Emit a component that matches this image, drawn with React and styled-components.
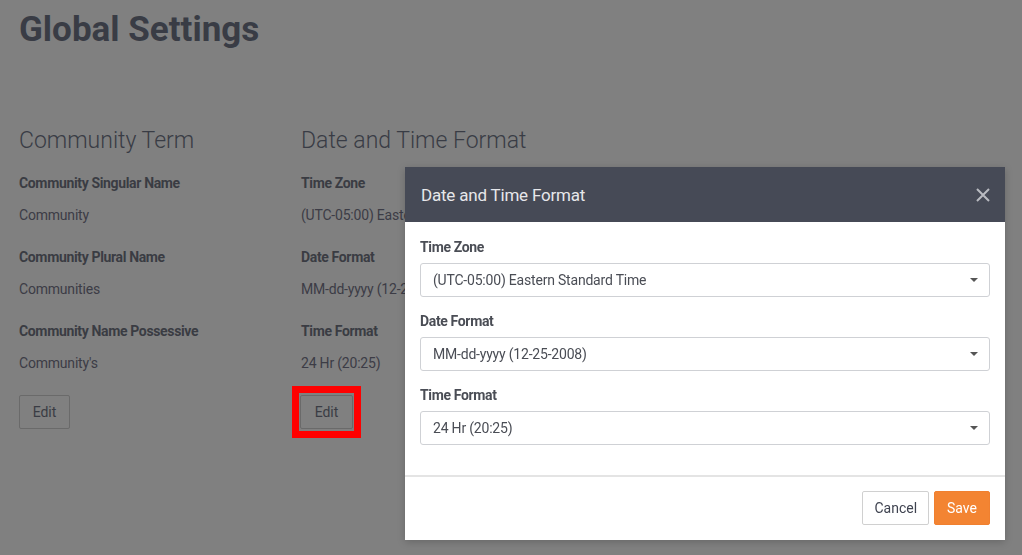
import React from 'react';
import styled, { createGlobalStyle } from 'styled-components';

const GlobalStyle = createGlobalStyle`
  html, body {
    margin: 0;
    padding: 0;
    background: #808080;
    font-family: "Roboto", "Liberation Sans", sans-serif;
    overflow: hidden;
  }
`;

const Page = styled.div`
  width: 1022px;
  height: 555px;
  padding: 8px 19px 0;
  box-sizing: border-box;
  color: #3a3d46;
`;

const Title = styled.h1`
  margin: 0;
  font-size: 35px;
  font-weight: 700;
  line-height: 44px;
  color: #393c45;
`;

const Columns = styled.div`
  display: flex;
  margin-top: 73px;
`;

const Column = styled.div`
  width: ${props => props.width}px;
  display: flex;
  flex-direction: column;
`;

const SectionTitle = styled.h2`
  margin: 0 0 16px;
  font-size: 23px;
  font-weight: 300;
  line-height: 32px;
  color: #393c45;
  white-space: nowrap;
`;

const FieldLabel = styled.div`
  font-size: 14px;
  font-weight: 700;
  line-height: 20px;
  letter-spacing: -0.35px;
  color: #3a3c43;
  white-space: nowrap;
`;

const FieldValue = styled.div`
  margin: 12px 0 22px;
  font-size: 14px;
  line-height: 20px;
  letter-spacing: -0.2px;
  color: #3c3c46;
  white-space: nowrap;
`;

const Highlight = styled.div`
  align-self: flex-start;
  display: flex;
  margin: -9px 0 0 -9px;
  padding: 2px 1px;
  border: 7px solid #ff0000;
`;

const EditButton = styled.button`
  align-self: flex-start;
  width: ${props => props.width || 51}px;
  height: 34px;
  padding: 0;
  border: 1px solid #6a6a6a;
  border-radius: 2px;
  background: transparent;
  font-family: inherit;
  font-size: 14px;
  color: #3a3c44;
`;

const Modal = styled.div`
  position: fixed;
  left: 405px;
  top: 167px;
  width: 600px;
  background: #fff;
  box-shadow: 0 2px 8px rgba(0, 0, 0, 0.2);
`;

const ModalHeader = styled.div`
  height: 55px;
  display: flex;
  align-items: center;
  justify-content: space-between;
  padding: 0 12px 0 16px;
  background: #464a56;
`;

const ModalTitle = styled.div`
  font-size: 17px;
  color: #e6e7ea;
  letter-spacing: -0.2px;
`;

const CloseButton = styled.button`
  width: 20px;
  height: 20px;
  padding: 0;
  border: 0;
  background: transparent;
  display: flex;
  align-items: center;
  justify-content: center;
`;

const ModalBody = styled.div`
  padding: 15px 15px 30px;
  border-bottom: 2px solid #e4e4e4;
`;

const FormGroup = styled.div`
  & + & {
    margin-top: 14px;
  }
`;

const FormLabel = styled.div`
  margin-bottom: 6px;
  font-size: 14px;
  font-weight: 700;
  line-height: 20px;
  letter-spacing: -0.35px;
  color: #4a4d55;
`;

const Select = styled.div`
  height: 34px;
  box-sizing: border-box;
  display: flex;
  align-items: center;
  justify-content: space-between;
  padding: 0 11px 0 12px;
  border: 1px solid #cfd1d5;
  border-radius: 3px;
  font-size: 14px;
  letter-spacing: -0.2px;
  color: #4a4d55;
`;

const Caret = styled.span`
  width: 0;
  height: 0;
  border-left: 4px solid transparent;
  border-right: 4px solid transparent;
  border-top: 4px solid #555;
`;

const ModalFooter = styled.div`
  display: flex;
  justify-content: flex-end;
  gap: 5px;
  padding: 14px 15px 15px;
`;

const FooterButton = styled.button`
  height: 34px;
  padding: 0 ${props => (props.primary ? 12 : 11)}px;
  border-radius: 2px;
  font-family: inherit;
  font-size: 14px;
  border: 1px solid ${props => (props.primary ? '#f08030' : '#d0d0d0')};
  background: ${props => (props.primary ? '#f38432' : '#fff')};
  color: ${props => (props.primary ? '#fff' : '#3f4350')};
`;

const Backdrop = styled.div`
  position: fixed;
  inset: 0;
  background: transparent;
`;

const communityFields = [
  ['Community Singular Name', 'Community'],
  ['Community Plural Name', 'Communities'],
  ['Community Name Possessive', "Community's"],
];

const dateFields = [
  ['Time Zone', '(UTC-05:00) Eastern Standard Time'],
  ['Date Format', 'MM-dd-yyyy (12-25-2008)'],
  ['Time Format', '24 Hr (20:25)'],
];

const App = () => {
  return (
    <>
      <GlobalStyle />
      <Page>
        <Title>Global Settings</Title>
        <Columns>
          <Column width={282}>
            <SectionTitle>Community Term</SectionTitle>
            {communityFields.map(([label, value]) => (
              <React.Fragment key={label}>
                <FieldLabel>{label}</FieldLabel>
                <FieldValue>{value}</FieldValue>
              </React.Fragment>
            ))}
            <EditButton>Edit</EditButton>
          </Column>
          <Column width={300}>
            <SectionTitle>Date and Time Format</SectionTitle>
            {dateFields.map(([label, value]) => (
              <React.Fragment key={label}>
                <FieldLabel>{label}</FieldLabel>
                <FieldValue>{value}</FieldValue>
              </React.Fragment>
            ))}
            <Highlight>
              <EditButton width={53}>Edit</EditButton>
            </Highlight>
          </Column>
        </Columns>
      </Page>
      <Backdrop />
      <Modal>
        <ModalHeader>
          <ModalTitle>Date and Time Format</ModalTitle>
          <CloseButton>
            <svg width="14" height="14" viewBox="0 0 14 14">
              <path d="M1 1L13 13M13 1L1 13" stroke="#b9bbc1" strokeWidth="2" />
            </svg>
          </CloseButton>
        </ModalHeader>
        <ModalBody>
          {dateFields.map(([label, value]) => (
            <FormGroup key={label}>
              <FormLabel>{label}</FormLabel>
              <Select>
                <span>{value}</span>
                <Caret />
              </Select>
            </FormGroup>
          ))}
        </ModalBody>
        <ModalFooter>
          <FooterButton>Cancel</FooterButton>
          <FooterButton primary>Save</FooterButton>
        </ModalFooter>
      </Modal>
    </>
  );
};

export default App;
